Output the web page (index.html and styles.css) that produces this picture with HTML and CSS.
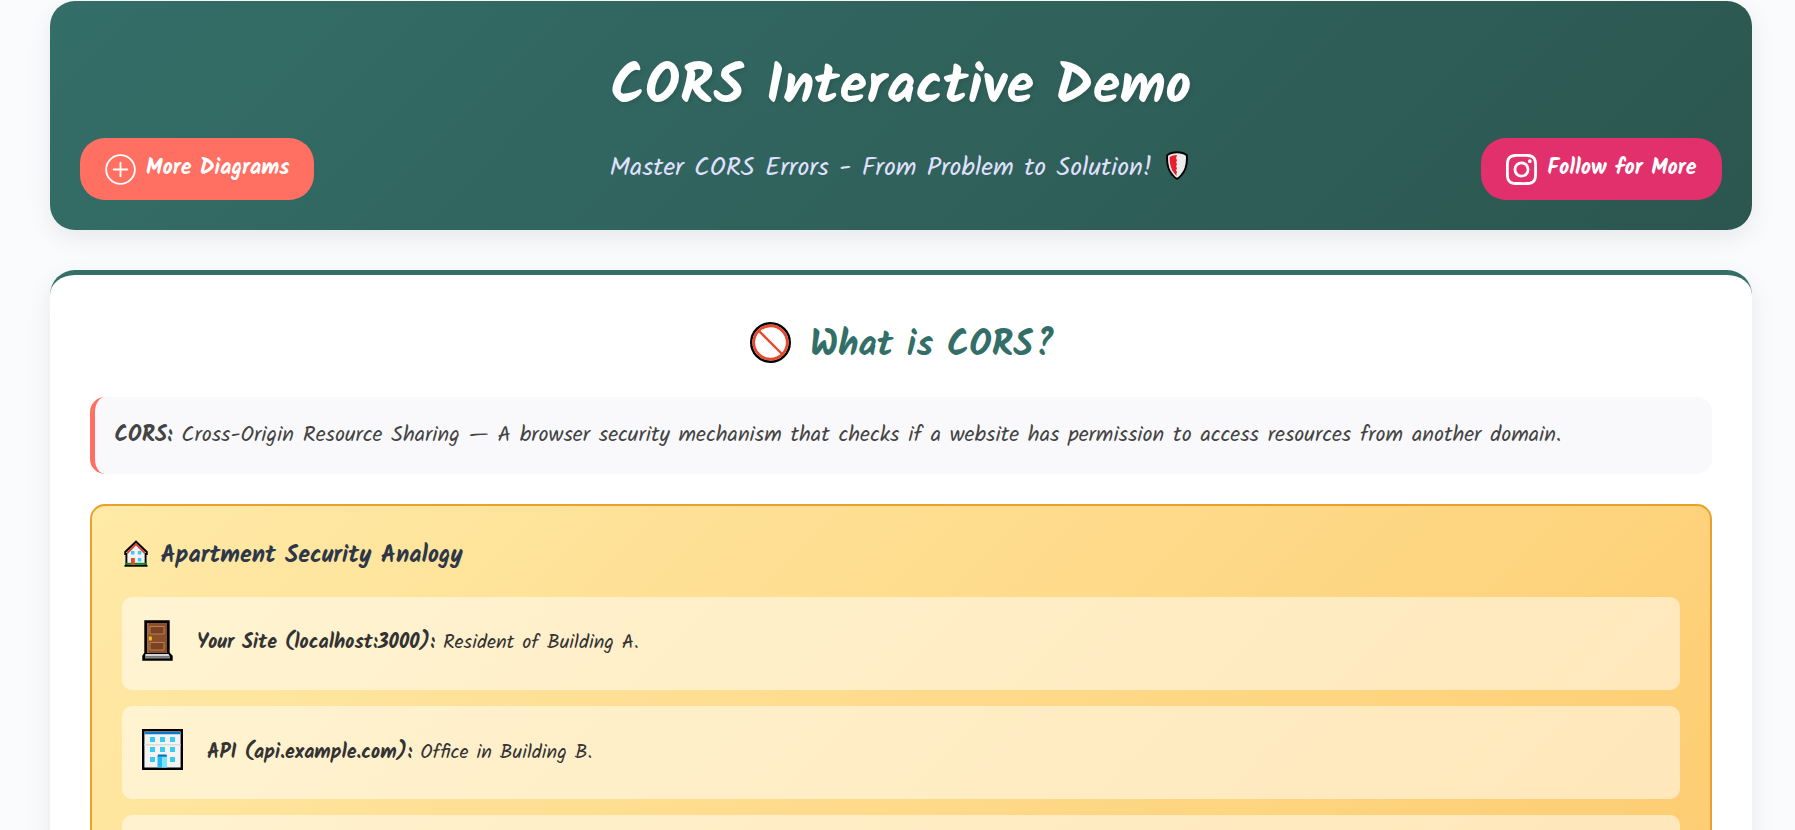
FILE: index.html
```
<!DOCTYPE html>
<html lang="en">
<head>
<meta charset="utf-8">
<title>CORS Interactive Demo</title>
<link rel="stylesheet" href="styles.css">
</head>
<body>
<header class="hero">
  <a class="btn btn-more">
    <svg class="btn-icon" viewBox="0 0 32 32" fill="none" stroke="#fff" stroke-width="1.9" stroke-linecap="round"><circle cx="16" cy="16" r="14.8"/><path d="M16 9v14M9 16h14"/></svg>
    <span>More Diagrams</span>
  </a>
  <div class="hero-text">
    <h1>CORS Interactive Demo</h1>
    <p class="subtitle"><span>Master CORS Errors - From Problem to Solution!</span>
      <svg class="shield" viewBox="0 0 22 29"><path d="M11 1.2Q17 1.2 20.8 4.3Q21.8 17 15.5 24Q13 27 11 27.8Q9 27 6.500 24Q.2 17 1.200 4.300Q5 1.200 11 1.200Z" fill="#ececec" stroke="#000" stroke-width="1.9"/><path d="M11 4Q6.500 4 3.600 6Q3.300 16 8 22Q9.600 24 11 24.800l-.7-2 .7-1.500-.9-2 .9-2-.9-2 .9-2-.9-2 .9-2-.9-2z" fill="#e81e2e"/></svg>
    </p>
  </div>
  <a class="btn btn-follow">
    <svg class="btn-icon" viewBox="0 0 24 24" fill="#fff"><path d="M12 2.163c3.204 0 3.584.012 4.850.070 3.252.148 4.771 1.691 4.919 4.919.058 1.265.069 1.645.069 4.849 0 3.205-.012 3.584-.069 4.849-.149 3.225-1.664 4.771-4.919 4.919-1.266.058-1.644.070-4.850.070-3.204 0-3.584-.012-4.849-.070-3.260-.149-4.771-1.699-4.919-4.920-.058-1.265-.070-1.644-.070-4.849 0-3.204.013-3.583.070-4.849.149-3.227 1.664-4.771 4.919-4.919 1.266-.057 1.645-.069 4.849-.069zM12 0C8.741 0 8.333.014 7.053.072 2.695.272.273 2.690.073 7.052.014 8.333 0 8.741 0 12s.014 3.668.072 4.948c.200 4.358 2.618 6.780 6.980 6.980C8.333 23.986 8.741 24 12 24s3.668-.014 4.948-.072c4.354-.200 6.782-2.618 6.979-6.980.059-1.280.073-1.689.073-4.948s-.014-3.667-.072-4.947c-.196-4.354-2.617-6.780-6.979-6.980C15.668.014 15.259 0 12 0zm0 5.838a6.162 6.162 0 1 0 0 12.324 6.162 6.162 0 0 0 0-12.324zM12 16a4 4 0 1 1 0-8 4 4 0 0 1 0 8zm6.406-11.845a1.440 1.440 0 1 0 0 2.881 1.440 1.440 0 0 0 0-2.881z"/></svg>
    <span>Follow for More</span>
  </a>
</header>
<main class="card">
  <h2>
    <svg class="ban" viewBox="0 0 41 41"><circle cx="20.500" cy="20.500" r="19.300" fill="#fff" stroke="#000" stroke-width="2.400"/><circle cx="20.500" cy="20.500" r="16.700" fill="none" stroke="#e8492c" stroke-width="2.700"/><path d="M9 9l23 23" stroke="#e8492c" stroke-width="2.400"/></svg>
    <span>What is CORS?</span>
  </h2>
  <p class="definition"><strong>CORS:</strong> Cross-Origin Resource Sharing — A browser security mechanism that checks if a website has permission to access resources from another domain.</p>
  <section class="analogy">
    <h3>
      <svg class="house" viewBox="0 0 24 27"><path d="M1 26V13.500L12 1.500 23 13.500V26z" fill="#f4f4f4"/><path d="M3.300 13L12 4l8.700 9" fill="none" stroke="#e0402c" stroke-width="1.800"/><path d="M2.400 25.200V14H1.200v-2L12 1.500 22.800 12v2h-1.200v11.200" fill="none" stroke="#000" stroke-width="1.900"/><path d="M1.200 23.800h21.600" stroke="#0a8a1e" stroke-width="2"/><path d="M.5 25.800h23" stroke="#000" stroke-width="1.800"/><path d="M7 18h3.800v7H7z" fill="#e8452c"/><path d="M7 11h3.500v3.500H7zM13.800 11h3.500v3.500h-3.500zM13.800 18h3.500v3.500h-3.500z" fill="#3ecbf0"/></svg>
      <span>Apartment Security Analogy</span>
    </h3>
    <ul class="items">
      <li class="resident">
        <svg class="door" viewBox="0 0 31 41"><path d="M3 1h24v32l3 3v4H1v-4l2-3z" fill="#000" stroke="#000" stroke-width="1.400"/><path d="M5 3h20v30H5z" fill="#8a4e28"/><path d="M5 3h2v30H5z" fill="#a3653c"/><path d="M8 6.500h14v7.500H8zM8 22.500h14v7.500H8z" fill="#794220" stroke="#bc8058"/><path d="M3.500 34h23l1.500 2.500H3z" fill="#d5d5d5"/><path d="M3 36.500h25v2H3z" fill="#898989"/><path d="M7 16.500h2.800v4H7z" fill="#f4c51d"/></svg>
        <p><strong>Your Site (localhost:3000):</strong> Resident of Building A.</p>
      </li>
      <li>
        <svg class="office" viewBox="0 0 41 41"><path d="M1.200 1.200h38.600v38.600H1.200z" fill="#f3f3f3" stroke="#000" stroke-width="2.400"/><path d="M2.500 3h36v2.300h-36z" fill="#0c78c8"/><path d="M2.500 15h36v1.500h-36z" fill="#dcdcdc"/><path d="M8 8h5v5H8zM18 8h5v5h-5zM28 8h5v5h-5zM8 18h5v5H8zM18 18h5v5h-5zM28 18h5v5h-5zM8 28h5v5H8zM28 28h5v5h-5z" fill="#38cbee"/><path d="M15.500 27h9.500v11.500h-9.500z" fill="#2ab8f3"/><path d="M20 28h5v10.500h-5z" fill="#76e4fb"/><path d="M16 25.500h8.500l.5 2H15.500z" fill="#0c70be"/></svg>
        <p><strong>API (api.example.com):</strong> Office in Building B.</p>
      </li>
      <li></li>
    </ul>
  </section>
</main>
</body>
</html>
```
FILE: styles.css
```
* { box-sizing: border-box; margin: 0; padding: 0; }

body {
  height: 830px;
  overflow: hidden;
  padding: 1px 43px 0 50px;
  background: #fafbfd;
  color: #333;
  font-family: Kalam, "Comic Neue", cursive;
  font-size: 20px;
  line-height: 1.7;
}

svg { display: block; flex: none; }

.hero {
  display: grid;
  grid-template-columns: 1fr auto 1fr;
  align-items: end;
  height: 229px;
  padding: 30px;
  border-radius: 25px;
  background: linear-gradient(135deg, #346e68, #2c5650);
  box-shadow: 0 8px 25px rgba(0, 0, 0, .08);
}

.btn {
  display: flex;
  align-items: center;
  gap: 10px;
  height: 62px;
  padding: 0 25px;
  border-radius: 25px;
  color: #fff;
  font-size: 22px;
  font-weight: 700;
  white-space: nowrap;
}

.btn span { line-height: 37px; margin-top: -2px; }
.btn-more { justify-self: start; padding-right: 24px; background: #ff7062; }
.btn-follow { justify-self: end; padding-right: 25.5px; gap: 10.5px; background: #e1306c; }
.btn-icon { width: 31px; height: 31px; margin-top: 1px; }

.hero-text { text-align: center; color: #fff; }

h1 {
  font-size: 56px;
  font-weight: 700;
  line-height: 95px;
  text-shadow: 2px 2px 4px rgba(0, 0, 0, .1);
}

.subtitle {
  display: flex;
  align-items: center;
  justify-content: center;
  gap: 14px;
  color: #e0e0ff;
  font-size: 26px;
  line-height: 44px;
  margin: 10px 4px 10px 0;
}

.shield { width: 22px; height: 29px; margin-top: -5px; }

.card {
  height: 700px;
  margin-top: 40px;
  padding: 40px;
  border-top: 5px solid #346e68;
  border-radius: 25px;
  background: #fff;
  box-shadow: 0 8px 25px rgba(0, 0, 0, .08);
}

h2 {
  display: flex;
  align-items: center;
  justify-content: center;
  gap: 19px;
  height: 61px;
  margin: 0 0 21px 3px;
  color: #346e68;
  font-size: 36px;
  line-height: 61px;
}

.ban { width: 41px; height: 41px; margin-top: -6px; }

.definition {
  height: 77px;
  padding: 20px 20px 20px 19.5px;
  border-left: 5px solid #ff7062;
  border-radius: 15px;
  background: #f9f9fb;
  color: #444;
  font-size: 22px;
  line-height: 37px;
}

.analogy {
  height: 500px;
  margin-top: 30px;
  padding: 28px 30px;
  border: 2px solid #eba02b;
  border-radius: 15px;
  background: linear-gradient(135deg, #ffeaa7, #fdcb6e);
}

h3 {
  display: flex;
  align-items: center;
  gap: 12.5px;
  height: 41px;
  margin: 0 0 22px 2px;
  color: #2d3748;
  font-size: 24px;
  line-height: 41px;
}

h3 span { padding-top: 1px; }

.house { width: 24px; height: 27px; margin-top: -2px; }

.items { display: flex; flex-direction: column; gap: 16px; list-style: none; }

.items li {
  display: flex;
  align-items: center;
  gap: 24px;
  height: 93px;
  padding: 0 20px;
  border-radius: 10px;
  background: rgba(255, 255, 255, .5);
}

.resident p { margin-top: -2px; }

.door { width: 31px; height: 41px; margin-top: -6px; }
.office { width: 41px; height: 41px; margin-top: -6px; }
```
